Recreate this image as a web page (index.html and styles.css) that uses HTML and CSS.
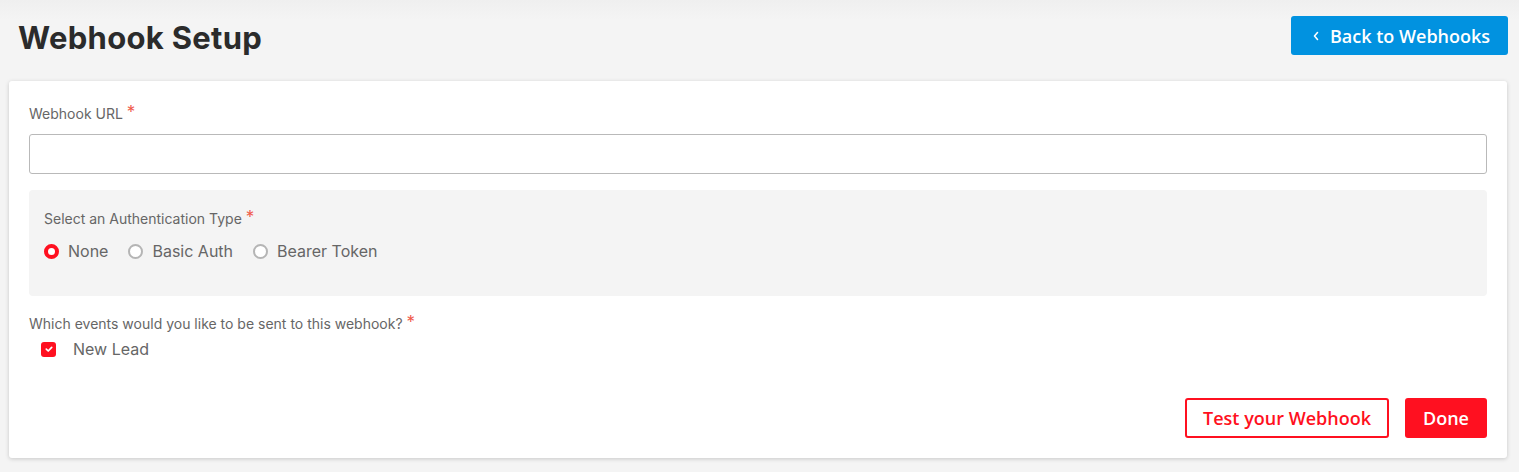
FILE: index.html
```html
<!DOCTYPE html>
<html lang="en">
<head>
<meta charset="utf-8">
<title>Webhook Setup</title>
<link rel="stylesheet" href="styles.css">
</head>
<body>
<div class="page">
  <header class="page-header">
    <h1 class="page-title">Webhook Setup</h1>
    <button class="btn btn-back" type="button">
      <svg class="chev" width="8" height="10" viewBox="0 0 8 10"><path d="M5.5 1.5 L2.5 5 L5.5 8.5" fill="none" stroke="#fff" stroke-width="1.6" stroke-linecap="round" stroke-linejoin="round"/></svg>
      <span>Back to Webhooks</span>
    </button>
  </header>
  <main class="card">
    <div class="field">
      <label class="label">Webhook URL <span class="req">*</span></label>
      <input class="input" type="text">
    </div>
    <div class="auth-box">
      <div class="label">Select an Authentication Type <span class="req">*</span></div>
      <div class="radios">
        <label class="radio"><span class="radio-dot checked"></span>None</label>
        <label class="radio"><span class="radio-dot"></span>Basic Auth</label>
        <label class="radio"><span class="radio-dot"></span>Bearer Token</label>
      </div>
    </div>
    <div class="events">
      <div class="label">Which events would you like to be sent to this webhook? <span class="req">*</span></div>
      <label class="check">
        <span class="check-box"><svg width="10" height="10" viewBox="0 0 10 10"><path d="M2.3 5.2 L4.2 7 L7.7 3.3" fill="none" stroke="#fff" stroke-width="1.7" stroke-linecap="round" stroke-linejoin="round"/></svg></span>
        New Lead
      </label>
    </div>
    <div class="actions">
      <button class="btn btn-outline" type="button">Test your Webhook</button>
      <button class="btn btn-primary" type="button">Done</button>
    </div>
  </main>
</div>
</body>
</html>
```
FILE: styles.css
```css
* { box-sizing: border-box; }
html, body { margin: 0; padding: 0; }
body {
  background: linear-gradient(#efefef 0, #f4f4f4 20px, #f4f4f4 100%);
  font-family: "Inter", "Noto Sans", sans-serif;
  color: #666;
  height: 472px;
  overflow: hidden;
}
.page { padding: 16px 11px 0 9px; }
.page-header {
  display: flex;
  justify-content: space-between;
  align-items: flex-start;
  height: 65px;
}
.page-title {
  margin: 0;
  padding: 4px 0 0 9px;
  font-size: 31px;
  font-weight: 700;
  color: #2b2b2b;
  line-height: 36px;
  letter-spacing: 0.3px;
}
.btn {
  font-family: "Open Sans", sans-serif;
  font-weight: 600;
  font-size: 18px;
  border-radius: 3px;
  cursor: pointer;
  height: 40px;
  line-height: 1;
}
.btn-back {
  display: flex;
  align-items: center;
  gap: 10px;
  background: #0192e0;
  color: #fff;
  border: none;
  width: 217px;
  height: 39px;
  padding: 0 0 0 21px;
}
.chev { margin-top: 1px; }
.card {
  background: #fff;
  border-radius: 3px;
  box-shadow: 0 1px 4px rgba(0,0,0,0.18);
  padding: 22px 20px 20px 20px;
  margin-right: 1px;
  height: 377px;
}
.label {
  font-size: 14px;
  color: #666;
  line-height: 18px;
}
.req { color: #f05a4a; font-size: 17px; vertical-align: 1px; }
.field .label { display: block; }
.input {
  display: block;
  width: 100%;
  height: 40px;
  margin-top: 11px;
  border: 1px solid #b9b9b9;
  border-radius: 3px;
  background: #fff;
}
.auth-box {
  margin-top: 16px;
  background: #f4f4f4;
  border-radius: 4px;
  height: 106px;
  padding: 18px 15px 0 15px;
}
.radios {
  display: flex;
  gap: 20px;
  margin-top: 13px;
}
.radio {
  display: flex;
  align-items: center;
  gap: 9px;
  font-size: 16px;
  color: #666;
}
.radio-dot {
  width: 15px;
  height: 15px;
  border-radius: 50%;
  border: 2px solid #b5b5b5;
  background: #fff;
}
.radio-dot.checked {
  border: 4.5px solid #ff1020;
  background: #fff;
}
.events { margin-top: 17px; }
.check {
  display: flex;
  align-items: center;
  gap: 17px;
  margin-top: 6px;
  padding-left: 12px;
  font-size: 16px;
  color: #666;
}
.check-box {
  width: 15px;
  height: 15px;
  border-radius: 3px;
  background: #ff1020;
  display: flex;
  align-items: center;
  justify-content: center;
}
.actions {
  display: flex;
  justify-content: flex-end;
  gap: 16px;
  margin-top: 39px;
}
.btn-outline {
  background: #fff;
  color: #ff1020;
  border: 2px solid #ff1020;
  width: 204px;
}
.btn-primary {
  background: #ff1020;
  color: #fff;
  border: none;
  width: 82px;
}
```
